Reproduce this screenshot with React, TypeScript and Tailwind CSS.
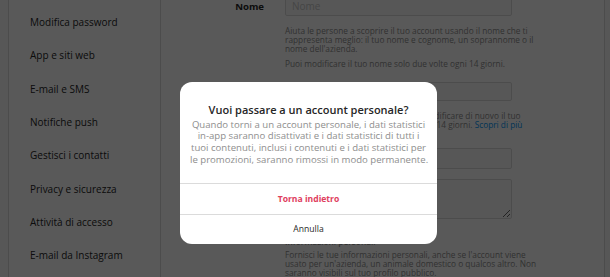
const sideItems = [
  "Modifica password",
  "App e siti web",
  "E-mail e SMS",
  "Notifiche push",
  "Gestisci i contatti",
  "Privacy e sicurezza",
  "Attività di accesso",
  "E-mail da Instagram",
];

function Label({ children, className = "" }: { children: string; className?: string }) {
  return (
    <div className={`w-[104px] shrink-0 pr-[1px] text-right text-[9.6px] font-bold text-[#262626] ${className}`}>
      {children}
    </div>
  );
}

export default function App() {
  return (
    <div className="relative h-[277px] w-[610px] overflow-hidden bg-[#fafafa] font-['Open_Sans',sans-serif]">
      <div className="ml-[8px] flex h-full w-[597px] border-x border-[#dbdbdb] bg-white">
        <aside className="flex w-[152px] shrink-0 flex-col border-r border-[#dbdbdb] pt-[6px]">
          {sideItems.map((item) => (
            <div key={item} className="flex h-[33.3px] items-center pl-[21px] text-[10px] text-[#262626]">
              {item}
            </div>
          ))}
        </aside>

        <main className="-mt-[4px] flex-1">
          <div className="flex">
            <Label className="pt-[1px] leading-[20px]">Nome</Label>
            <div className="ml-[20px] w-[227px]">
              <input
                placeholder="Nome"
                className="block h-[20px] w-full rounded-[2px] border border-[#dbdbdb] bg-[#fafafa] px-[6px] text-[10px] placeholder:text-[#c7c7c7]"
              />
              <p className="mt-[9.5px] whitespace-nowrap text-[8.3px] leading-[9px] text-[#8e8e8e]">
                Aiuta le persone a scoprire il tuo account usando il nome che ti
                <br />
                rappresenta meglio: il tuo nome e cognome, un soprannome o il
                <br />
                nome dell'azienda.
              </p>
              <p className="mt-[6px] whitespace-nowrap text-[8.3px] leading-[9px] text-[#8e8e8e]">
                Puoi modificare il tuo nome solo due volte ogni 14 giorni.
              </p>
            </div>
          </div>

          <div className="mt-[14.5px] flex">
            <Label className="leading-[19px]">Nome utente</Label>
            <div className="ml-[20px] w-[227px]">
              <input
                defaultValue="aranzulla"
                className="block h-[19px] w-full rounded-[2px] border border-[#dbdbdb] bg-[#fafafa] px-[6px] text-[10px] text-[#262626]"
              />
              <p className="mt-[9.5px] whitespace-nowrap text-[8.3px] leading-[9px] text-[#8e8e8e]">
                Nella maggior parte dei casi, potrai modificare di nuovo il tuo
                <br />
                nome utente in salvoaranzulla per altri 14 giorni.{" "}
                <span className="text-[#0095f6]">Scopri di più</span>
              </p>
            </div>
          </div>

          <div className="mt-[19.5px] flex">
            <Label className="leading-[21px]">Sito web</Label>
            <div className="ml-[20px] w-[227px]">
              <input
                placeholder="Sito web"
                className="block h-[21px] w-full rounded-[2px] border border-[#dbdbdb] bg-[#fafafa] px-[6px] text-[10px]"
              />
            </div>
          </div>

          <div className="mt-[10px] flex">
            <Label className="leading-[20px]">Biografia</Label>
            <div className="ml-[20px] w-[227px]">
              <textarea className="block h-[40px] w-full rounded-[2px] border border-[#dbdbdb] bg-[#fafafa] px-[6px] text-[10px]" />
            </div>
          </div>

          <div className="ml-[124px] w-[240px]">
            <h4 className="mt-[17px] text-[8.3px] font-semibold leading-[11px] text-[#8e8e8e]">
              Informazioni personali
            </h4>
            <p className="mt-[3px] whitespace-nowrap text-[8.3px] leading-[9px] text-[#8e8e8e]">
              Fornisci le tue informazioni personali, anche se l'account viene
              <br />
              usato per un'azienda, un animale domestico o qualcos altro. Non
              <br />
              saranno visibili sul tuo profilo pubblico.
            </p>
          </div>
        </main>
      </div>

      <div className="absolute inset-0 bg-[rgba(0,0,0,0.65)]" />

      <div className="absolute left-[180px] top-[82px] flex h-[162px] w-[257px] flex-col overflow-hidden rounded-[12px] bg-white">
        <div className="flex-1 px-[10px] pt-[19.5px] text-center">
          <h3 className="text-[11px] font-semibold leading-[15px] text-[#262626]">
            Vuoi passare a un account personale?
          </h3>
          <p className="mt-[2px] whitespace-nowrap text-[9.6px] leading-[11.7px] text-[#8e8e8e]">
            Quando torni a un account personale, i dati statistici
            <br />
            in-app saranno disattivati e i dati statistici di tutti i
            <br />
            tuoi contenuti, inclusi i contenuti e i dati statistici per
            <br />
            le promozioni, saranno rimossi in modo permanente.
          </p>
        </div>
        <button className="h-[31px] border-t border-[#dbdbdb] text-[8.6px] font-bold text-[#e0405e]">
          Torna indietro
        </button>
        <button className="h-[30px] border-t border-[#dbdbdb] text-[8.6px] text-[#262626]">Annulla</button>
      </div>
    </div>
  );
}
